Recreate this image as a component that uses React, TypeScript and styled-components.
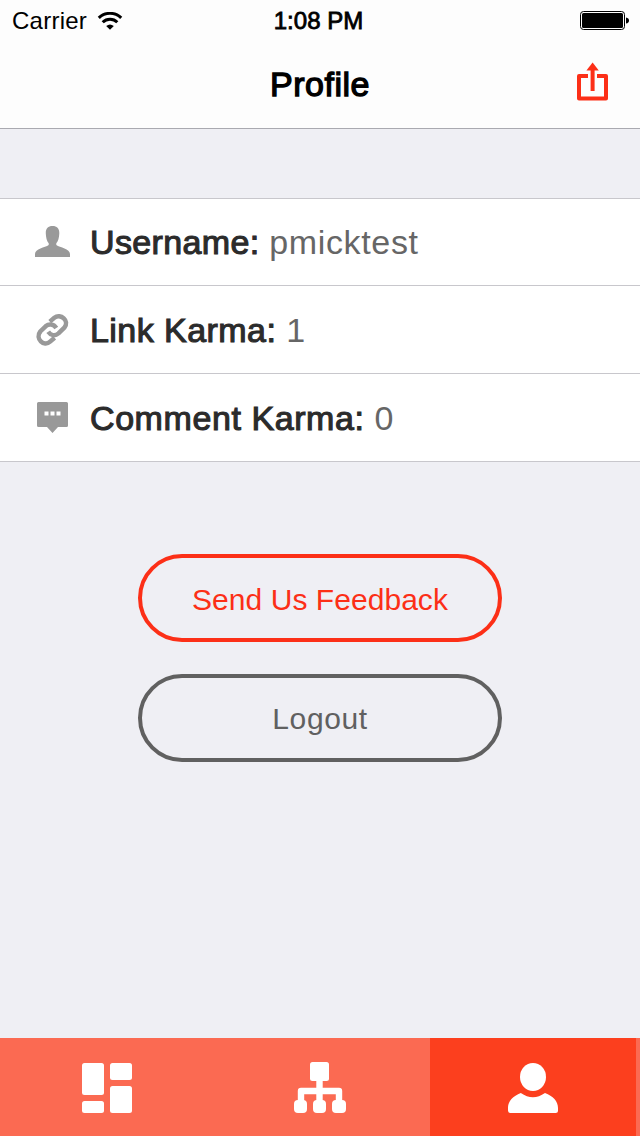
import React from "react";
import styled, { createGlobalStyle } from "styled-components";

const Global = createGlobalStyle`
  * { box-sizing: border-box; }
  body { margin: 0; background: #efeff4; font-family: "Liberation Sans", Arial, sans-serif; }
`;

const Screen = styled.div`
  width: 640px;
  height: 1136px;
  display: flex;
  flex-direction: column;
  background: #efeff4;
  overflow: hidden;
`;

const Header = styled.header`
  height: 129px;
  background: #fdfdfd;
  border-bottom: 1px solid #a9a9b0;
  color: #000;
`;

const StatusBar = styled.div`
  height: 40px;
  display: grid;
  grid-template-columns: 1fr auto 1fr;
  align-items: center;
  padding: 2px 11px 0 12px;
  font-size: 24px;
`;

const Carrier = styled.div`
  display: flex;
  align-items: center;
  gap: 10px;
  letter-spacing: 0.25px;
`;

const WifiIcon = styled.svg`
  display: block;
  margin-top: -1px;
`;

const Clock = styled.div`
  -webkit-text-stroke: 0.8px currentColor;
  letter-spacing: 0.05px;
  margin-left: -4px;
`;

const BatteryIcon = styled.svg`
  justify-self: end;
  display: block;
  margin-top: -2px;
`;

const NavBar = styled.div`
  height: 88px;
  display: grid;
  grid-template-columns: 1fr auto 1fr;
  align-items: center;
  padding: 0 28px;
`;

const Title = styled.h1`
  grid-column: 2;
  margin: 1px 0 0;
  font-size: 34px;
  font-weight: 400;
  -webkit-text-stroke: 1.3px currentColor;
  letter-spacing: 0.5px;
`;

const ShareButton = styled.button`
  justify-self: end;
  margin: 0 0 4px;
  padding: 0;
  border: 0;
  background: none;
  svg { display: block; }
`;

const List = styled.section`
  margin-top: 69px;
  border-top: 1px solid #c8c7cc;
  background: #fff;
`;

const Row = styled.div<{ $first?: boolean }>`
  height: ${(p) => (p.$first ? 87 : 88)}px;
  display: flex;
  align-items: center;
  padding-left: 34px;
  border-bottom: 1px solid #c8c7cc;
  font-size: 34px;
  white-space: pre;
  span { padding-top: ${(p) => (p.$first ? 0 : 2)}px; }
`;

const RowIcon = styled.svg`
  flex: none;
  width: 36px;
  height: 36px;
  margin-right: 20px;
  color: #999;
`;

const Label = styled.span<{ $spacing: number }>`
  color: #2b2b2b;
  -webkit-text-stroke: 1.1px currentColor;
  letter-spacing: ${(p) => p.$spacing}px;
`;

const Value = styled.span`
  color: #666;
  letter-spacing: 0.65px;
`;

const Actions = styled.div`
  flex: 1;
  display: flex;
  flex-direction: column;
  align-items: center;
  gap: 32px;
  padding-top: 92px;
`;

const PillButton = styled.button<{ $color: string; $spacing: number; $top: number }>`
  width: 364px;
  height: 88px;
  padding: ${(p) => p.$top}px 0 0;
  border: 4px solid ${(p) => p.$color};
  border-radius: 44px;
  background: none;
  color: ${(p) => p.$color};
  font-family: inherit;
  font-size: 30px;
  letter-spacing: ${(p) => p.$spacing}px;
`;

const TabBar = styled.nav`
  height: 98px;
  display: grid;
  grid-template-columns: 214px 216px 206px;
  background: #fb6a52;
`;

const Tab = styled.button<{ $active?: boolean; $shift?: number }>`
  display: flex;
  align-items: center;
  justify-content: center;
  margin: 0;
  padding: 2px ${(p) => p.$shift ?? 0}px 0 0;
  border: 0;
  background: ${(p) => (p.$active ? "#fc3f1e" : "transparent")};
  color: #fff;
  svg { display: block; fill: currentColor; }
`;

export default function App() {
  return (
    <>
      <Global />
      <Screen>
        <Header>
          <StatusBar>
            <Carrier>
              Carrier
              <WifiIcon width="26" height="18" viewBox="0 0 26 18" fill="none" stroke="#000" strokeWidth="3">
                <path d="M1.8 5.9A16 16 0 0 1 24.2 5.9" />
                <path d="M5.7 10.2A10.3 10.3 0 0 1 20.3 10.2" />
                <path d="M13 17.8 9.2 14Q13 10.8 16.8 14Z" fill="#000" stroke="none" />
              </WifiIcon>
            </Carrier>
            <Clock>1:08 PM</Clock>
            <BatteryIcon width="49" height="19" viewBox="0 0 49 19">
              <rect x="0.5" y="0.5" width="44" height="18" rx="3" fill="none" stroke="#000" />
              <rect x="2" y="2" width="41" height="15" rx="1.5" />
              <path d="M46 6.5Q49 7 49 9.5T46 12.5Z" />
            </BatteryIcon>
          </StatusBar>
          <NavBar>
            <Title>Profile</Title>
            <ShareButton aria-label="Share">
              <svg width="38" height="40" viewBox="0 0 38 40">
                <path d="M14 14H5V36.5H32V14H23" fill="none" stroke="#fc2f17" strokeWidth="4" strokeLinejoin="round" />
                <path d="M18.6 29V6" stroke="#fc2f17" strokeWidth="4" />
                <path d="M18.6 0.5 24.8 8.5H12.4Z" fill="#fc2f17" />
              </svg>
            </ShareButton>
          </NavBar>
        </Header>

        <List>
          <Row $first>
            <RowIcon viewBox="0 0 36 36" fill="currentColor">
              <path d="M18.5 2C23 2 25.5 4.5 25.3 9.5C25.1 14 24.2 17 22.3 19.3V21C26 23.5 36 24.5 36 30V33H1V30C1 24.5 11 23.5 14.7 21V19.3C12.8 17 12 14 11.8 9.5C11.6 4.5 14 2 18.5 2Z" />
            </RowIcon>
            <Label $spacing={0.35}>Username: </Label>
            <Value>pmicktest</Value>
          </Row>
          <Row>
            <RowIcon viewBox="0 0 36 36" fill="none" stroke="currentColor" strokeWidth="4.5">
              <path d="M15.8 9.6 20.3 5.8C26.6 1 36 8.8 30.3 15.7L24.5 21.4C21 24.4 16.8 23.6 14.2 19.8" />
              <path d="M22.3 16C19.4 11.6 14.8 11.6 11.6 14.3L6.3 19.5C.7 26.6 10 35.2 16.1 29.7L20.6 25.8" />
            </RowIcon>
            <Label $spacing={0.45}>Link Karma: </Label>
            <Value>1</Value>
          </Row>
          <Row>
            <RowIcon viewBox="0 0 36 36" fill="currentColor">
              <path fillRule="evenodd" d="M4.5 2H32.5Q34 2 34 3.5V25.5Q34 27 32.5 27H24L18.5 33 13 27H4.5Q3 27 3 25.5V3.5Q3 2 4.5 2ZM10.5 11.5V15.5H14.5V11.5ZM16.5 11.5V15.5H20.5V11.5ZM22.5 11.5V15.5H26.5V11.5Z" />
            </RowIcon>
            <Label $spacing={0.58}>Comment Karma: </Label>
            <Value>0</Value>
          </Row>
        </List>

        <Actions>
          <PillButton $color="#fc2f17" $spacing={0.05} $top={3}>Send Us Feedback</PillButton>
          <PillButton $color="#606060" $spacing={0.6} $top={1}>Logout</PillButton>
        </Actions>

        <TabBar>
          <Tab aria-label="Dashboard">
            <svg width="50" height="50" viewBox="0 0 50 50">
              <rect width="22" height="32" rx="2.5" />
              <rect y="38" width="22" height="12" rx="2.5" />
              <rect x="28" width="22" height="17" rx="2.5" />
              <rect x="28" y="23" width="22" height="27" rx="2.5" />
            </svg>
          </Tab>
          <Tab $shift={4} aria-label="Categories">
            <svg width="52" height="52" viewBox="0 0 52 52">
              <rect x="16" y="0" width="19" height="19" rx="2.5" />
              <path d="M7 39V29H45V39M25.5 18V39" fill="none" stroke="#fff" strokeWidth="6.4" strokeLinejoin="round" />
              <rect x="0" y="38" width="13" height="13" rx="4" />
              <rect x="19" y="38" width="13" height="13" rx="4" />
              <rect x="38" y="38" width="14" height="13" rx="4" />
            </svg>
          </Tab>
          <Tab $active aria-label="Profile">
            <svg width="50" height="50" viewBox="0 0 50 50">
              <ellipse cx="25" cy="14" rx="13" ry="14" />
              <path d="M12.8 30Q25 38.5 37 30C45 33 50 38 50 45V47.5Q50 50 47.5 50H2.5Q0 50 0 47.5V45C0 38 5 33 12.8 30Z" />
            </svg>
          </Tab>
        </TabBar>
      </Screen>
    </>
  );
}
